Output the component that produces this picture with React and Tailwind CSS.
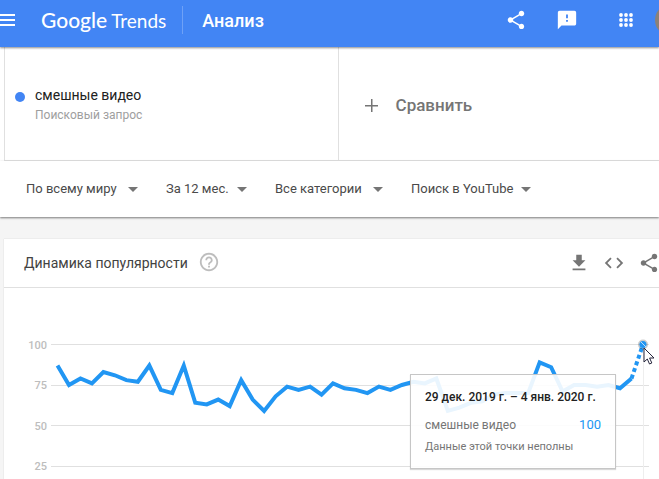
import React from "react";
import {
  MdShare,
  MdFeedback,
  MdGetApp,
  MdCode,
  MdHelpOutline,
} from "react-icons/md";

const filters = [
  { label: "Регион", value: "По всему миру", width: "w-[112px]" },
  { label: "Период", value: "За 12 мес.", width: "w-[81px]" },
  { label: "Категория", value: "Все категории", width: "w-[108px]" },
  { label: "Тип поиска", value: "Поиск в YouTube", width: "w-[120px]" },
];

const popularity = [
  87, 75, 79, 76, 83, 81, 78, 77, 87, 72, 70, 87, 64, 63, 66, 62, 78, 66, 59,
  68, 74, 72, 74, 69, 76, 73, 72, 70, 74, 72, 75, 77, 76, 79, 59, 61, 64, 65,
  69, 70, 70, 70, 89, 86, 71, 75, 75, 74, 75, 73, 79, 100,
];

const gridValues = [100, 75, 50, 25];

const getX = (index) => 53.5 + index * 11.48;
const getY = (value) => 56.5 + (100 - value) * 1.62;
const toPoints = (from, to) =>
  popularity
    .slice(from, to)
    .map((value, i) => `${getX(from + i)},${getY(value)}`)
    .join(" ");

const Header = () => (
  <header className="relative z-10 flex h-[47px] items-center overflow-hidden bg-[#4285f4] pb-2 text-white shadow-[0_1px_2px_rgba(0,0,0,0.45)]">
    <button type="button" aria-label="Меню" className="w-[15px] shrink-0">
      <svg width="15" height="12" viewBox="0 0 15 12" fill="currentColor">
        <path d="M0 0h15v2H0zM0 5h15v2H0zM0 10h15v2H0z" />
      </svg>
    </button>
    <a
      href="#"
      className="ml-[26px] flex shrink-0 items-baseline gap-1 pt-px font-['Lato',sans-serif] leading-6"
    >
      <span className="text-[21px] font-medium">Google</span>
      <span className="text-[19px]">Trends</span>
    </a>
    <div className="ml-4 h-7 w-px bg-[#6ea1f7]" />
    <h1 className="ml-[19px] pt-0.5 text-lg font-medium">Анализ</h1>
    <div className="ml-auto flex shrink-0 items-center">
      <button type="button" aria-label="Поделиться">
        <MdShare size={22} />
      </button>
      <button type="button" aria-label="Отправить отзыв" className="ml-[29px]">
        {/* bubble with a dashed exclamation mark */}
        <MdFeedback size={22} />
      </button>
      <button type="button" aria-label="Приложения" className="ml-[37px]">
        <svg width="22" height="22" viewBox="0 0 22 22" fill="currentColor">
          {[6, 11, 16].map((cy) =>
            [6, 11, 16].map((cx) => (
              <circle key={`${cx}-${cy}`} cx={cx} cy={cy} r="1.9" />
            ))
          )}
        </svg>
      </button>
      <button
        type="button"
        aria-label="Аккаунт"
        className="-mr-7 ml-[18px] size-8 rounded-full bg-[#8b8178]"
      />
    </div>
  </header>
);

const SearchTerms = () => (
  <section className="ml-1 flex h-[114px] border-b border-l border-[#e0e0e0]">
    <div className="flex w-[51%] items-center border-r border-[#e0e0e0] pl-2.5">
      <span className="mb-3.5 size-[10px] rounded-full bg-[#4285f4]" />
      <div className="ml-2.5 pt-0.5">
        <p className="text-sm leading-5 text-[#212121]">смешные видео</p>
        <p className="text-xs leading-5 text-[#9e9e9e]">Поисковый запрос</p>
      </div>
    </div>
    <button
      type="button"
      className="flex flex-1 items-center gap-[18px] pl-[26px] pt-1 text-[17px] font-medium text-[#757575]"
    >
      <svg width="13" height="13" viewBox="0 0 13 13" fill="currentColor">
        <path d="M6 0h1.5v6H13v1.5H7.5V13H6V7.5H0V6h6z" />
      </svg>
      Сравнить
    </button>
  </section>
);

const Filters = () => (
  <section className="relative flex h-14 items-center gap-7 pl-[26px] shadow-[0_1px_2px_rgba(0,0,0,0.5)]">
    {filters.map((filter) => (
      <div key={filter.label} className={`flex items-center ${filter.width}`}>
        <select
          aria-label={filter.label}
          className="min-w-0 flex-1 appearance-none bg-transparent text-[13px] text-[#4a4a4a] outline-none"
        >
          <option>{filter.value}</option>
        </select>
        <svg
          width="10"
          height="5"
          viewBox="0 0 10 5"
          className="pointer-events-none shrink-0"
          fill="#757575"
        >
          <path d="M0 0h10L5 5z" />
        </svg>
      </div>
    ))}
  </section>
);

const Tooltip = () => (
  <div className="absolute right-[43px] top-[86px] h-[95px] w-[206px] border border-[#c6c6c6] bg-white/90 px-3.5 pt-3 shadow-[0_1px_1px_rgba(0,0,0,0.15)]">
    <p className="whitespace-nowrap text-xs font-medium leading-5 text-[#212121]">
      29 дек. 2019 г. – 4 янв. 2020 г.
    </p>
    <div className="mt-2 flex justify-between leading-5">
      <span className="text-xs leading-5 text-[#757575]">смешные видео</span>
      <span className="text-[13px] text-[#2196f3]">100</span>
    </div>
    <p className="mt-1 text-[11px] leading-4 text-[#757575]">
      Данные этой точки неполны
    </p>
  </div>
);

const TrendChart = () => {
  const last = popularity.length - 1;

  return (
    <div className="relative">
      <svg
        viewBox="0 0 655 191"
        className="block h-auto w-full"
        role="img"
        aria-label="Динамика популярности"
      >
        {gridValues.map((value) => (
          <g key={value}>
            <path
              d={`M47 ${Math.floor(getY(value)) + 0.5}H645`}
              stroke="#e0e0e0"
            />
            <text
              x="43"
              y={getY(value) + 4}
              textAnchor="end"
              fontSize="11"
              fill="#bdbdbd"
              fontWeight="500"
            >
              {value}
            </text>
          </g>
        ))}
        <path d="M639.5 56V191" stroke="#eeeeee" />
        <polyline
          points={toPoints(0, last)}
          fill="none"
          stroke="#2196f3"
          strokeWidth="4"
        />
        <polyline
          points={toPoints(last - 1)}
          fill="none"
          stroke="#2196f3"
          strokeWidth="4"
          strokeDasharray="4 3"
        />
        <circle cx={getX(last)} cy="56.5" r="5" fill="#000" opacity="0.2" />
        <circle cx={getX(last)} cy="56.5" r="3.5" fill="#2196f3" />
        <path d="M637 54l5 5" stroke="#bbdefb" />
      </svg>
      <Tooltip />
      <svg
        viewBox="0 0 12 19"
        width="12"
        height="19"
        className="absolute right-1 top-[59px]"
      >
        <path
          d="M1 1v14l3.3-3 2.2 5 2.3-1-2.2-5H11z"
          fill="#fff"
          stroke="#26263c"
        />
      </svg>
    </div>
  );
};

const App = () => {
  return (
    <div className="min-h-screen overflow-x-hidden bg-[#f5f5f5] font-['Roboto',sans-serif]">
      <div className="bg-white">
        <Header />
        <SearchTerms />
        <Filters />
      </div>
      <main className="ml-1 mt-[22px] bg-white shadow-[0_0_1px_rgba(0,0,0,0.2)]">
        <div className="flex h-[49px] items-center border-b border-[#e0e0e0] pl-5">
          <h2 className="text-sm text-[#424242]">Динамика популярности</h2>
          <button
            type="button"
            aria-label="Справка"
            className="mb-0.5 ml-2.5 text-[#bdbdbd]"
          >
            <MdHelpOutline size={22} />
          </button>
          <div className="-mr-px ml-auto flex gap-[13px] text-[#757575]">
            <button type="button" aria-label="Скачать">
              <MdGetApp size={22} />
            </button>
            <button type="button" aria-label="Встроить">
              <MdCode size={22} />
            </button>
            <button type="button" aria-label="Поделиться графиком">
              <MdShare size={22} />
            </button>
          </div>
        </div>
        <TrendChart />
      </main>
    </div>
  );
};

export default App;
